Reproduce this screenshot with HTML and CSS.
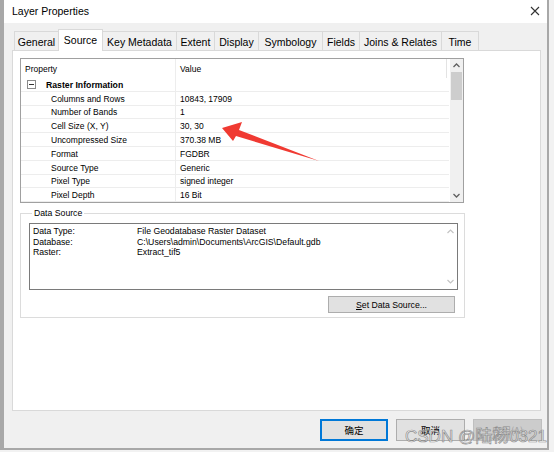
FILE: index.html
```html
<!DOCTYPE html>
<html>
<head>
<meta charset="utf-8">
<link rel="stylesheet" href="styles.css">
</head>
<body>
<div class="window">
  <div class="titlebar">
    <span class="title">Layer Properties</span>
    <svg class="close" width="10" height="10" viewBox="0 0 10 10"><path d="M1 1 L9 9 M9 1 L1 9" stroke="#333" stroke-width="1.1" fill="none"/></svg>
  </div>
  <div class="content">
    <div class="tabs">
      <div class="tab t-general">General</div>
      <div class="tab tab-active t-source">Source</div>
      <div class="tab t-key">Key Metadata</div>
      <div class="tab t-extent">Extent</div>
      <div class="tab t-display">Display</div>
      <div class="tab t-symb">Symbology</div>
      <div class="tab t-fields">Fields</div>
      <div class="tab t-joins">Joins &amp; Relates</div>
      <div class="tab t-time">Time</div>
    </div>
    <div class="panel">
      <div class="grid">
        <div class="grid-main">
          <div class="grid-head"><div class="c1 head-c1">Property</div><div class="c2 head-c2">Value</div></div>
          <div class="row"><div class="c1 cat-c1"><span class="toggle"></span><span class="cat-label">Raster Information</span></div><div class="c2"></div></div>
          <div class="row"><div class="c1">Columns and Rows</div><div class="c2">10843, 17909</div></div>
          <div class="row"><div class="c1">Number of Bands</div><div class="c2">1</div></div>
          <div class="row"><div class="c1">Cell Size (X, Y)</div><div class="c2">30, 30</div></div>
          <div class="row"><div class="c1">Uncompressed Size</div><div class="c2">370.38 MB</div></div>
          <div class="row"><div class="c1">Format</div><div class="c2">FGDBR</div></div>
          <div class="row"><div class="c1">Source Type</div><div class="c2">Generic</div></div>
          <div class="row"><div class="c1">Pixel Type</div><div class="c2">signed integer</div></div>
          <div class="row"><div class="c1">Pixel Depth</div><div class="c2">16 Bit</div></div>
        </div>
        <div class="vscroll">
          <svg class="sarrow" width="13" height="13" viewBox="0 0 13 13"><polyline points="3.5,8 6.5,5 9.5,8" fill="none" stroke="#606060" stroke-width="1.3"/></svg>
          <div class="thumb"></div>
          <div class="track"></div>
          <svg class="sarrow" width="13" height="13" viewBox="0 0 13 13"><polyline points="3.5,5 6.5,8 9.5,5" fill="none" stroke="#606060" stroke-width="1.3"/></svg>
        </div>
      </div>
      <fieldset class="group">
        <legend class="group-label">Data Source</legend>
        <div class="textbox">
          <div class="tb-content">
            <div class="tb-line"><span class="tb-key">Data Type:</span><span>File Geodatabase Raster Dataset</span></div>
            <div class="tb-line"><span class="tb-key">Database:</span><span>C:\Users\admin\Documents\ArcGIS\Default.gdb</span></div>
            <div class="tb-line"><span class="tb-key">Raster:</span><span>Extract_tif5</span></div>
          </div>
          <div class="tb-scroll">
            <svg width="13" height="13" viewBox="0 0 13 13"><polyline points="3.5,8 6.5,5 9.5,8" fill="none" stroke="#c4c4c4" stroke-width="1.2"/></svg>
            <svg width="13" height="13" viewBox="0 0 13 13"><polyline points="3.5,5 6.5,8 9.5,5" fill="none" stroke="#c4c4c4" stroke-width="1.2"/></svg>
          </div>
        </div>
        <div class="set-row"><div class="btn btn-set"><span class="ul">S</span>et Data Source...</div></div>
      </fieldset>
    </div>
    <div class="buttons">
      <div class="btn btn-dlg btn-default">确定</div>
      <div class="btn btn-dlg">取消</div>
      <div class="btn btn-dlg btn-disabled">应用(A)</div>
    </div>
  </div>
  <svg class="arrow" width="554" height="452" viewBox="0 0 554 452"><polygon points="222,128 242,122 239,130 319,161 236,136 233,141" fill="#f03a32"/></svg>
  <div class="watermark">CSDN @陆杨0321</div>
</div>
</body>
</html>
```
FILE: styles.css
```css
* { box-sizing: border-box; }
html, body { margin: 0; padding: 0; }
body {
  width: 554px;
  height: 452px;
  background: #f2f2f2;
  font-family: "Liberation Sans", Arial, sans-serif;
  overflow: hidden;
}
.window {
  position: relative;
  width: 549px;
  height: 450px;
  border-left: 4px solid #a8a8a8;
  border-right: 2px solid #a8a8a8;
  border-bottom: 2px solid #a8a8a8;
  background: #f0f0f0;
  display: flex;
  flex-direction: column;
}
.titlebar {
  height: 23px;
  background: #ffffff;
  display: flex;
  align-items: center;
  justify-content: space-between;
  padding: 0 6px 1px 8px;
}
.title {
  font-size: 10.5px;
  color: #000;
}
.close { display: block; margin-right: 1px; }
.content {
  flex: 1;
  padding: 6px 6px 0 8px;
  display: flex;
  flex-direction: column;
}
.tabs {
  display: flex;
  align-items: flex-end;
  height: 21px;
  padding-left: 2px;
  position: relative;
  z-index: 2;
}
.tab {
  height: 19px;
  border: 1px solid #d9d9d9;
  border-bottom: none;
  margin-right: -1px;
  background: #f0f0f0;
  font-size: 10.5px;
  color: #000;
  display: flex;
  align-items: center;
  justify-content: center;
  padding-top: 1px;
}
.tab-active {
  height: 22px;
  background: #ffffff;
  margin-bottom: -1px;
  padding-bottom: 3px;
  position: relative;
  z-index: 3;
}
.t-general { width: 45px; }
.t-source { width: 45px; }
.t-key { width: 75px; }
.t-extent { width: 39px; }
.t-display { width: 45px; }
.t-symb { width: 65px; }
.t-fields { width: 38px; }
.t-joins { width: 83px; }
.t-time { width: 38px; }
.panel {
  width: 529px;
  height: 361px;
  background: #ffffff;
  border: 1px solid #d9d9d9;
  padding: 7px 0 0 7px;
  display: flex;
  flex-direction: column;
}
.grid {
  width: 444px;
  height: 145px;
  border: 1px solid #a0a0a0;
  display: flex;
  overflow: hidden;
  font-size: 8.5px;
  color: #000;
}
.grid-main {
  width: 429px;
  display: flex;
  flex-direction: column;
}
.grid-head {
  height: 19px;
  display: flex;
  flex: none;
}
.row {
  height: 13.8px;
  display: flex;
  flex: none;
  border-bottom: 1px solid #ededed;
}
.c1 {
  width: 155px;
  flex: none;
  border-right: 1px solid #ededed;
  padding-left: 30px;
  padding-top: 1px;
  display: flex;
  align-items: center;
  white-space: nowrap;
}
.c2 {
  flex: 1;
  padding-left: 4px;
  padding-top: 1px;
  display: flex;
  align-items: center;
  white-space: nowrap;
}
.head-c1 { padding-left: 4px; }
.head-c2 { border-right: 1px solid #e3e3e3; margin-right: 2px; }
.cat-c1 { padding-left: 6px; }
.toggle {
  width: 9px;
  height: 9px;
  border: 1px solid #8a8a8a;
  position: relative;
  margin-right: 10px;
  flex: none;
}
.toggle::after {
  content: "";
  position: absolute;
  left: 1px;
  right: 1px;
  top: 3px;
  height: 1px;
  background: #333;
}
.cat-label { font-weight: bold; font-size: 8.7px; }
.vscroll {
  width: 13px;
  flex: none;
  margin-left: 1px;
  background: #f0f0f0;
  display: flex;
  flex-direction: column;
}
.sarrow { display: block; flex: none; }
.thumb {
  height: 28px;
  margin: 0 1px;
  background: #cdcdcd;
  flex: none;
}
.track { flex: 1; }
.group {
  margin: 5px 0 0 0;
  width: 445px;
  border: 1px solid #dcdcdc;
  padding: 5px 6px 4px 8px;
  min-width: 0;
}
.group-label {
  font-size: 8.7px;
  padding: 0 2px;
  margin-left: 3px;
  color: #000;
}
.textbox {
  width: 429px;
  height: 67px;
  border: 1px solid #7a7a7a;
  display: flex;
  background: #fff;
}
.tb-content {
  flex: 1;
  padding: 2px 0 0 3px;
  font-size: 8.7px;
  line-height: 10.5px;
}
.tb-line { display: flex; white-space: nowrap; }
.tb-key { width: 104px; flex: none; }
.tb-scroll {
  width: 13px;
  display: flex;
  flex-direction: column;
  justify-content: space-between;
  padding: 1px 0;
}
.tb-scroll svg { display: block; }
.set-row {
  display: flex;
  justify-content: flex-end;
  padding-right: 3px;
  margin-top: 6px;
}
.btn {
  display: flex;
  align-items: center;
  justify-content: center;
  background: #e1e1e1;
  border: 1px solid #adadad;
  color: #000;
}
.btn-set {
  width: 127px;
  height: 17px;
  font-size: 8.7px;
}
.ul { text-decoration: underline; }
.buttons {
  display: flex;
  justify-content: flex-end;
  gap: 8px;
  margin-top: 8px;
  margin-right: -1px;
}
.btn-dlg {
  width: 69px;
  height: 22px;
  font-family: "Noto Sans CJK SC", "Liberation Sans", sans-serif;
  font-size: 9.5px;
}
.btn-default {
  border: 2px solid #0078d7;
  width: 68px;
}
.btn-disabled {
  background: #cccccc;
  border-color: #bfbfbf;
  color: #a0a0a0;
}
.arrow {
  position: absolute;
  left: -4px;
  top: 0;
  pointer-events: none;
}
.watermark {
  position: absolute;
  left: 401px;
  top: 422px;
  font-family: "Liberation Sans", "Noto Sans CJK SC", sans-serif;
  font-size: 17px;
  color: rgba(255, 255, 255, 0.55);
  -webkit-text-stroke: 0.7px rgba(110, 110, 110, 0.75);
  white-space: nowrap;
  pointer-events: none;
}
```
